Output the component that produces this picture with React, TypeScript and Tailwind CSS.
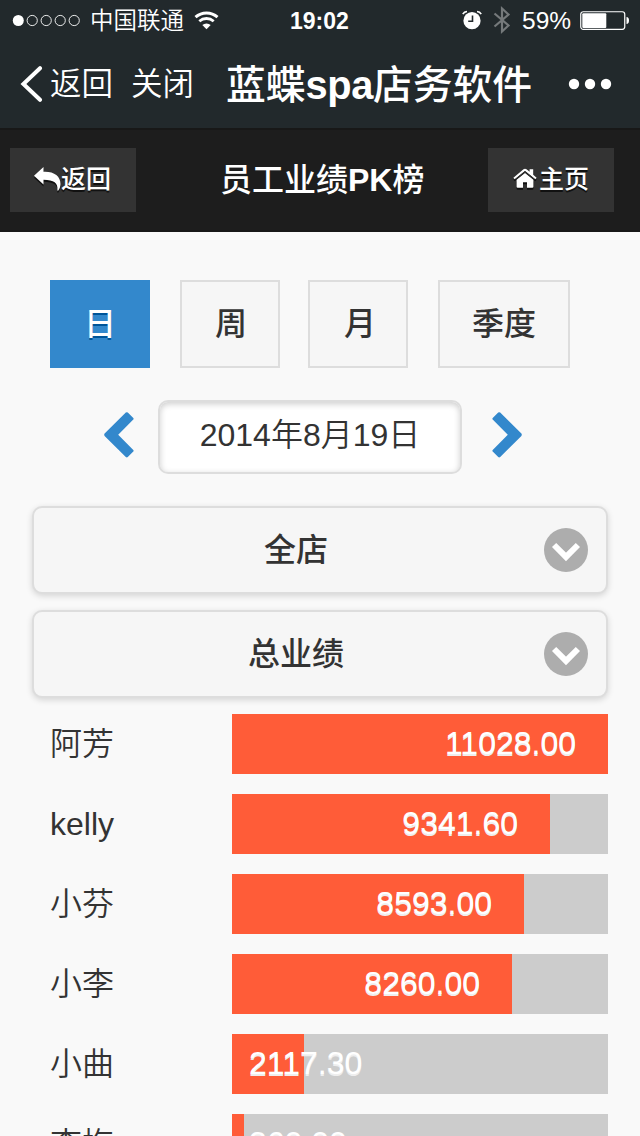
import React from "react";

const periods = [
  { label: "日", box: "w-[100px] ml-[50px] bg-[#3388cc] border-[#3388cc] text-white [text-shadow:0_2px_0_#005599]" },
  { label: "周", box: "w-[100px] ml-[30px] pl-[2px] bg-[#f6f6f6] border-[#dddddd] text-[#333333]" },
  { label: "月", box: "w-[100px] ml-[28px] pl-[4px] bg-[#f6f6f6] border-[#dddddd] text-[#333333]" },
  { label: "季度", box: "w-[132px] ml-[30px] bg-[#f6f6f6] border-[#dddddd] text-[#333333]" },
];

const staff = [
  { name: "阿芳", value: "11028.00", bar: 376 },
  { name: "kelly", value: "9341.60", bar: 318 },
  { name: "小芬", value: "8593.00", bar: 292 },
  { name: "小李", value: "8260.00", bar: 280 },
  { name: "小曲", value: "2117.30", bar: 72 },
  { name: "李梅", value: "360.00", bar: 12 },
];

function StatusBar() {
  return (
    <div className="flex h-10 items-center">
      <svg className="ml-3 h-4 w-[70px] shrink-0" viewBox="0 0 70 16">
        <circle cx="6.3" cy="8.5" r="5.5" fill="#fff" />
        {[20.2, 34.2, 48.2, 62.2].map((x) => (
          <circle key={x} cx={x} cy="8.5" r="5.1" fill="none" stroke="#fff" strokeWidth="0.9" />
        ))}
      </svg>
      <span className="ml-2 w-[95px] whitespace-nowrap pt-[2px] text-[23.5px] font-[350] leading-10">中国联通</span>
      <svg className="ml-[9px] h-[19px] w-[26px] shrink-0" viewBox="0 0 26 19" fill="none" stroke="#fff">
        <path d="M1.5 6.2A16.5 16.5 0 0 1 23.5 6.2" strokeWidth="3" />
        <path d="M5.3 10.2A11 11 0 0 1 19.7 10.2" strokeWidth="2.8" />
        <path d="M12.5 18.2L8.3 14A6.3 6.3 0 0 1 16.7 14Z" fill="#fff" stroke="none" />
      </svg>
      <span className="ml-[70px] w-[60px] whitespace-nowrap pt-[2px] text-[23px] font-bold leading-10">19:02</span>
      <svg className="ml-[112px] h-5 w-5 shrink-0" viewBox="0 0 20 20">
        <circle cx="10" cy="10.7" r="8.6" fill="#fff" />
        <path d="M.8 4.2A5 5 0 0 1 5 1.5M15 1.5A5 5 0 0 1 19.2 4.2" stroke="#fff" strokeWidth="1.6" fill="none" />
        <path d="M10.5 5.5V11.2H6.2" stroke="#22292c" strokeWidth="1.6" fill="none" />
      </svg>
      <svg className="ml-[11px] h-7 w-[18px] shrink-0" viewBox="0 0 18 28" fill="none" stroke="#75797b" strokeWidth="2.2">
        <path d="M1.5 7.5L15.5 19.5L9 25.5V2.5L15.5 8.5L1.5 20.5" />
      </svg>
      <span className="ml-[11px] w-[51px] whitespace-nowrap pt-[2px] text-[24.5px] leading-10">59%</span>
      <svg className="ml-[7px] h-5 w-[50px] shrink-0" viewBox="0 0 50 20">
        <rect x="0.75" y="1.75" width="44" height="17.6" rx="2.5" fill="none" stroke="#fff" strokeWidth="1.2" />
        <rect x="2.3" y="3.2" width="24" height="14.8" rx="1" fill="#fff" />
        <path d="M46.5 7Q49 7.2 49 10.5Q49 13.8 46.5 14Z" fill="#fff" />
      </svg>
    </div>
  );
}

function AppBar() {
  return (
    <div className="flex h-[88px] items-center">
      <svg className="ml-5 h-9 w-[23px] shrink-0" viewBox="0 0 23 36" fill="none" stroke="#fff" strokeWidth="4" strokeLinecap="round">
        <path d="M20 2.2L3.4 18L20 33.8" />
      </svg>
      <span className="ml-[7px] w-[63px] whitespace-nowrap pt-px text-[31.5px] font-[350]">返回</span>
      <span className="ml-[18px] w-[62px] whitespace-nowrap pt-px text-[31.5px] font-[350]">关闭</span>
      <span className="ml-[33px] w-[306px] whitespace-nowrap pt-[3px] text-[39.8px] font-medium">
        蓝蝶<span className="font-bold tracking-[-0.4px]">spa</span>店务软件
      </span>
      <svg className="ml-9 h-3 w-11 shrink-0" viewBox="0 0 44 12" fill="#fff">
        <circle cx="6" cy="6" r="5.2" />
        <circle cx="22" cy="6" r="5.2" />
        <circle cx="38" cy="6" r="5.2" />
      </svg>
    </div>
  );
}

function PageHeader() {
  return (
    <div className="flex h-[104px] items-center border-y-2 border-[#181818] bg-[#1d1d1d] pl-[10px]">
      <button className="flex h-16 w-[126px] items-center bg-[#333333] pl-6 text-[25px] font-medium [text-shadow:0_2px_0_#111]">
        <svg className="mb-px h-[26px] w-[27px] shrink-0" viewBox="0 0 27 26">
          <path d="M0 10.7L9.5 2V6.7C20 6.2 26.5 11 26.5 19C26.5 21.5 25.5 24 24.3 25.5C23.9 26 23.2 25.8 23.4 25C24.2 18 20 14.7 9.5 14.7V19.5Z" fill="#111" />
          <path d="M0 8.7L9.5 0V4.7C20 4.2 26.5 9 26.5 17C26.5 19.5 25.5 22 24.3 23.5C23.9 24 23.2 23.8 23.4 23C24.2 16 20 12.7 9.5 12.7V17.5Z" fill="#fff" />
        </svg>
        <span className="whitespace-nowrap">返回</span>
      </button>
      <h1 className="ml-[84px] w-[206px] whitespace-nowrap text-[32px] font-medium">
        员工业绩<span className="font-bold">PK</span>榜
      </h1>
      <button className="ml-[62px] flex h-16 w-[126px] items-center bg-[#333333] pl-[25px] text-[25px] font-medium [text-shadow:0_2px_0_#111]">
        <svg className="mb-[2px] h-[22px] w-6 shrink-0" viewBox="0 0 24 22">
          {[
            { y: 2, color: "#111" },
            { y: 0, color: "#fff" },
          ].map((layer) => (
            <g key={layer.y} transform={`translate(0 ${layer.y})`} fill={layer.color}>
              <path d="M12 4.9L20.4 11.8V18.7Q20.4 19.8 19.3 19.8H14V14.3H10V19.8H4.7Q3.6 19.8 3.6 18.7V11.8Z" />
              <path d="M10.5 1.2Q12 .1 13.5 1.2L16.6 3.8V1.2H20.2V6.8L23.6 9.7L22.3 11.3L12 2.9L1.7 11.3L.4 9.7Z" />
            </g>
          ))}
          <path d="M2.6 11.4L12 3.7L21.4 11.4" fill="none" stroke="#333333" strokeWidth="1.1" />
        </svg>
        <span className="ml-[2px] whitespace-nowrap">主页</span>
      </button>
    </div>
  );
}

function SelectBox({ label }: { label: string }) {
  return (
    <div className="mx-8 flex h-[88px] items-center rounded-[10px] border-2 border-[#dddddd] bg-[#f6f6f6] pr-[18px] shadow-[0_2px_6px_rgba(0,0,0,0.15)]">
      <span className="flex-1 pl-[14px] text-center text-[32px] font-medium text-[#333333]">{label}</span>
      <svg className="h-11 w-11" viewBox="0 0 44 44">
        <circle cx="22" cy="22" r="22" fill="#adadad" />
        <path d="M10.1 17L22 28.9L33.9 17" fill="none" stroke="#fff" strokeWidth="6" />
      </svg>
    </div>
  );
}

export default function App() {
  return (
    <div className="h-[1136px] w-[640px] overflow-hidden bg-[#f9f9f9] font-['Liberation_Sans','Noto_Sans_CJK_SC',sans-serif] text-[#333333]">
      <header className="text-white">
        <div className="bg-[#22292c]">
          <StatusBar />
          <AppBar />
        </div>
        <PageHeader />
      </header>
      <div className="mt-12 flex">
        {periods.map((p) => (
          <button key={p.label} className={`flex h-[88px] items-center justify-center border-2 text-[32px] font-medium ${p.box}`}>
            {p.label}
          </button>
        ))}
      </div>
      <div className="mt-8 flex h-[74px] items-center">
        <svg className="mb-[5px] ml-[104px] h-[46px] w-[30px]" viewBox="0 0 30 46" fill="#3388cc">
          <path d="M.6 21.6L21.8 .6Q22.8 -.2 23.8 .6L29.3 6Q30 6.8 29.3 7.6L14.2 22.8L29.3 38Q30 38.8 29.3 39.6L23.8 45Q22.8 45.8 21.8 45L.6 24Q-.2 22.8 .6 21.6Z" />
        </svg>
        <div className="ml-6 flex h-[74px] w-[304px] items-center justify-center rounded-[10px] border-2 border-[#dddddd] bg-white pb-1 text-[32px] font-[350] shadow-[inset_0_2px_6px_rgba(0,0,0,0.2)]">
          <span className="whitespace-nowrap">2014年8月19日</span>
        </div>
        <svg className="mb-[5px] ml-[30px] h-[46px] w-[30px]" viewBox="0 0 30 46" fill="#3388cc">
          <path d="M29.4 21.6L8.2 .6Q7.2 -.2 6.2 .6L.7 6Q0 6.8 .7 7.6L15.8 22.8L.7 38Q0 38.8 .7 39.6L6.2 45Q7.2 45.8 8.2 45L29.4 24Q30.2 22.8 29.4 21.6Z" />
        </svg>
      </div>
      <div className="mt-8 flex flex-col gap-4">
        <SelectBox label="全店" />
        <SelectBox label="总业绩" />
      </div>
      <div className="mt-4 flex flex-col gap-5">
        {staff.map((s) => (
          <div key={s.name} className="flex h-[60px] items-center">
            <span className="ml-[50px] w-[182px] pb-px text-[32px] font-[350]">{s.name}</span>
            <div className="h-[60px] w-[376px] bg-[#cccccc]">
              <div className="h-full bg-[#ff5c38]" style={{ width: s.bar }}>
                <div className="flex h-full min-w-max items-center justify-end pb-[2px] pl-[17px] pr-8 text-[32px] text-white [text-shadow:0_2px_0_#eeeeee]">
                  {s.value}
                </div>
              </div>
            </div>
          </div>
        ))}
      </div>
    </div>
  );
}
